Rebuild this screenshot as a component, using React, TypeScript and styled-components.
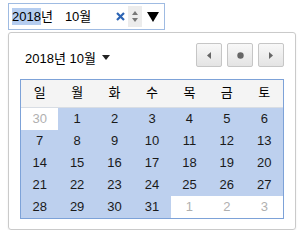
import * as React from 'react';
import styled, { createGlobalStyle } from 'styled-components';

const GlobalStyle = createGlobalStyle`
    body {
        margin: 0;
        background: #ffffff;
        font-family: "Liberation Sans", "Noto Sans CJK KR", sans-serif;
    }
`;

const Page = styled.div`
    padding: 3px 0 0 8px;
`;

const MonthInput = styled.div`
    box-sizing: border-box;
    width: 157px;
    height: 27px;
    border: 1px solid #9fbbe2;
    display: flex;
    align-items: center;
    padding-left: 3px;
    font-size: 13px;
    color: #000;
    line-height: 17px;
`;

const Field = styled.span<{ $active?: boolean }>`
    background: ${p => (p.$active ? '#b5cdf0' : 'transparent')};
    height: 17px;
`;

const Unit = styled.span<{ $gap?: number }>`
    margin-right: ${p => p.$gap || 0}px;
    height: 17px;
`;

const ClearButton = styled.span`
    margin-left: auto;
    width: 10px;
    margin-right: 3px;
    display: flex;
    justify-content: center;
`;

const Spinner = styled.span`
    width: 14px;
    height: 21px;
    background: #ececec;
    display: flex;
    align-items: center;
    justify-content: center;
`;

const DropArrow = styled.span`
    width: 22px;
    display: flex;
    justify-content: center;
`;

const Popup = styled.div`
    box-sizing: border-box;
    margin-top: 2px;
    width: 288px;
    height: 198px;
    border: 1px solid #cacaca;
    border-radius: 3px;
    box-shadow: 0 1px 2px rgba(0, 0, 0, 0.08);
    padding: 10px 11px;
`;

const Header = styled.div`
    display: flex;
    align-items: center;
    height: 24px;
    margin-bottom: 12px;
`;

const MonthLabel = styled.div`
    display: flex;
    align-items: center;
    gap: 6px;
    padding-left: 5px;
    font-size: 13px;
    color: #000;
    margin-top: 5px;
`;

const NavGroup = styled.div`
    margin-left: auto;
    display: flex;
    gap: 5px;
`;

const NavButton = styled.div`
    box-sizing: border-box;
    width: 26px;
    height: 24px;
    border: 1px solid #c6c6c6;
    border-radius: 2px;
    background: linear-gradient(#f8f8f8, #e4e4e4);
    display: flex;
    align-items: center;
    justify-content: center;
`;

const Grid = styled.div`
    box-sizing: border-box;
    width: 264px;
    border: 1px solid #7da2d8;
    display: grid;
    grid-template-columns: repeat(7, 1fr);
`;

const DayName = styled.div`
    height: 27px;
    line-height: 26px;
    text-align: center;
    font-size: 13px;
    background: #f4f4f4;
    border-bottom: 1px solid #d8dde4;
`;

const DateCell = styled.div<{ $outside?: boolean }>`
    height: 22px;
    line-height: 22px;
    text-align: center;
    font-size: 13px;
    color: ${p => (p.$outside ? '#b0b0b0' : '#1a1a1a')};
    background: ${p => (p.$outside ? '#ffffff' : '#bdd0ee')};
`;

const dayNames = ['일', '월', '화', '수', '목', '금', '토'];

const dates: { d: number; out?: boolean }[] = [
    { d: 30, out: true },
    ...Array.from({ length: 31 }, (_, i) => ({ d: i + 1 })),
    { d: 1, out: true },
    { d: 2, out: true },
    { d: 3, out: true },
];

export default function App() {
    return (
        <Page>
            <GlobalStyle />
            <MonthInput>
                <Field $active>2018</Field>
                <Unit $gap={12}>년</Unit>
                <Field>10</Field>
                <Unit>월</Unit>
                <ClearButton>
                    <svg width="9" height="9" viewBox="0 0 9 9">
                        <path d="M1 1 L8 8 M8 1 L1 8" stroke="#2c64b4" strokeWidth="2.2" />
                    </svg>
                </ClearButton>
                <Spinner>
                    <svg width="8" height="15" viewBox="0 0 8 15">
                        <path d="M4 2 L7 6 L1 6 Z" fill="#777" />
                        <path d="M4 13 L7 9 L1 9 Z" fill="#777" />
                    </svg>
                </Spinner>
                <DropArrow>
                    <svg width="12" height="10" viewBox="0 0 12 10">
                        <path d="M0 0 L12 0 L6 10 Z" fill="#000" />
                    </svg>
                </DropArrow>
            </MonthInput>
            <Popup>
                <Header>
                    <MonthLabel>
                        <span>2018년 10월</span>
                        <svg width="8" height="5" viewBox="0 0 8 5">
                            <path d="M0 0 L8 0 L4 5 Z" fill="#222" />
                        </svg>
                    </MonthLabel>
                    <NavGroup>
                        <NavButton>
                            <svg width="4" height="7" viewBox="0 0 4 7">
                                <path d="M4 0 L0 3.5 L4 7 Z" fill="#666" />
                            </svg>
                        </NavButton>
                        <NavButton>
                            <svg width="7" height="7" viewBox="0 0 7 7">
                                <circle cx="3.5" cy="3.5" r="3.2" fill="#666" />
                            </svg>
                        </NavButton>
                        <NavButton>
                            <svg width="4" height="7" viewBox="0 0 4 7">
                                <path d="M0 0 L4 3.5 L0 7 Z" fill="#666" />
                            </svg>
                        </NavButton>
                    </NavGroup>
                </Header>
                <Grid>
                    {dayNames.map(n => (
                        <DayName key={n}>{n}</DayName>
                    ))}
                    {dates.map((c, i) => (
                        <DateCell key={i} $outside={c.out}>
                            {c.d}
                        </DateCell>
                    ))}
                </Grid>
            </Popup>
        </Page>
    );
}
